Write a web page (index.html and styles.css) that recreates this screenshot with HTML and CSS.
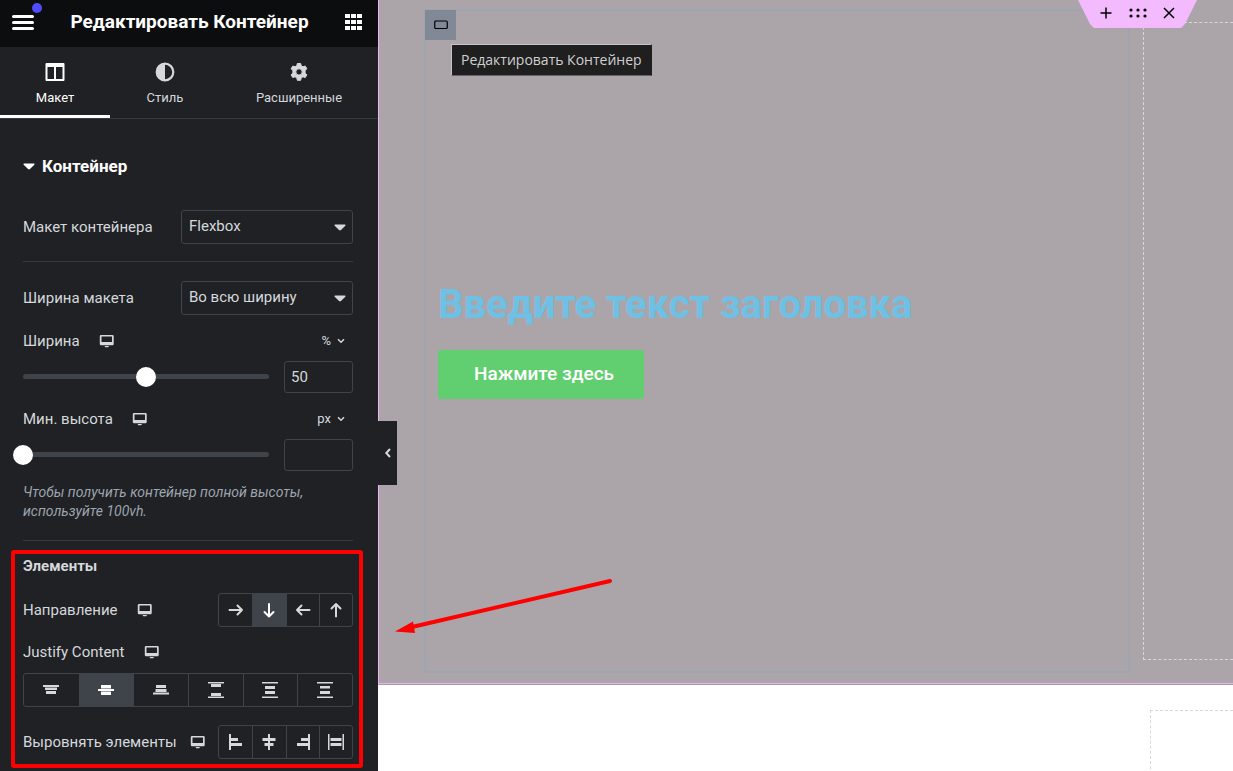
FILE: index.html
```html
<!DOCTYPE html>
<html lang="ru">
<head>
<meta charset="utf-8">
<meta name="viewport" content="width=device-width, initial-scale=1">
<title>Редактировать Контейнер</title>
<link rel="stylesheet" href="styles.css">
</head>
<body>
<svg class="sprite" aria-hidden="true">
  <symbol id="desktop" viewBox="0 0 16 14"><path fill-rule="evenodd" d="M2 1H13.500a1.200 1.200 0 0 1 1.200 1.200V10a1.200 1.200 0 0 1-1.200 1.200H2A1.200 1.200 0 0 1 .8 10V2.200A1.200 1.200 0 0 1 2 1ZM2.500 2.500V8H13V2.500ZM5.500 12h4.500l-.8 1.300H6.300Z"/></symbol>
  <symbol id="caret" viewBox="0 0 12 7"><path d="M1 .5h10q1 .3.300 1.200L7 6Q6 6.800 5 6L.7 1.700Q0 .8 1 .5Z"/></symbol>
  <symbol id="chevron" viewBox="0 0 8 6"><path d="M1 1.200 4 4.200 7 1.200" fill="none" stroke="currentColor" stroke-width="1.500"/></symbol>
</svg>
<div class="editor">
  <aside class="panel">
    <header class="panel-header">
      <button class="icon-button menu-button" aria-label="Меню">
        <svg width="22" height="15" viewBox="0 0 22 15"><path d="M1.500 1.500h19M1.500 7.500h19M1.500 13.500h19" stroke="currentColor" stroke-width="3" stroke-linecap="round"/></svg>
        <span class="notice-dot"></span>
      </button>
      <h1 class="panel-title">Редактировать Контейнер</h1>
      <button class="icon-button" aria-label="Виджеты">
        <svg width="17" height="16" viewBox="0 0 17 16"><path d="M0 0h5v4H0zM6 0h5v4H6zM12 0h5v4h-5zM0 6h5v4H0zM6 6h5v4H6zM12 6h5v4h-5zM0 12h5v4H0zM6 12h5v4H6zM12 12h5v4h-5z" fill="currentColor"/></svg>
      </button>
    </header>
    <nav class="tabs">
      <button class="tab tab-active">
        <svg width="20" height="20" viewBox="0 0 20 20"><path fill="currentColor" fill-rule="evenodd" d="M1.500 1h17q1 0 1 1v16q0 1-1 1h-17q-1 0-1-1V2q0-1 1-1ZM2.500 5v12H9V5ZM11 5v12h6.500V5Z"/></svg>
        <span>Макет</span>
      </button>
      <button class="tab">
        <svg width="20" height="20" viewBox="0 0 20 20"><circle cx="10" cy="10" r="8.300" fill="none" stroke="currentColor" stroke-width="2.200"/><path d="M10 1.500a8.500 8.500 0 0 0 0 17Z" fill="currentColor"/></svg>
        <span>Стиль</span>
      </button>
      <button class="tab">
        <svg width="20" height="20" viewBox="0 0 20 20"><path fill="currentColor" stroke="currentColor" stroke-linejoin="round" fill-rule="evenodd" d="M8.300 1.500h3.400l.5 2.300 1.800 1 2.200-.8 1.700 2.800-1.800 1.600v2.800l1.800 1.600-1.700 2.800-2.200-.8-1.800 1-.5 2.500H8.300l-.5-2.500-1.800-1-2.200.8-1.700-2.800 1.800-1.600V8.400L2.100 6.800 3.800 4l2.200.8 1.800-1ZM10 6.700a3.200 3.200 0 1 0 0 6.400 3.200 3.200 0 0 0 0-6.400Z"/></svg>
        <span>Расширенные</span>
      </button>
    </nav>
    <div class="controls">
      <button class="section-toggle"><svg width="12" height="7"><use href="#caret"/></svg>Контейнер</button>
      <div class="row">
        <label for="layout">Макет контейнера</label>
        <span class="select"><select id="layout"><option>Flexbox</option><option>Grid</option></select><svg width="12" height="7"><use href="#caret"/></svg></span>
      </div>
      <hr class="divider">
      <div class="row">
        <label for="width-mode">Ширина макета</label>
        <span class="select"><select id="width-mode"><option>Во всю ширину</option></select><svg width="12" height="7"><use href="#caret"/></svg></span>
      </div>
      <div class="row slider-label">
        <span class="label"><label for="width">Ширина</label><svg class="device" width="16" height="14"><use href="#desktop"/></svg></span>
        <button class="unit">%<svg width="8" height="6"><use href="#chevron"/></svg></button>
      </div>
      <div class="row slider-row">
        <span class="slider"><input type="range" id="width" min="0" max="100" value="50"></span>
        <input class="number" type="text" value="50" aria-label="Ширина, %">
      </div>
      <div class="row slider-label">
        <span class="label"><label for="height">Мин. высота</label><svg class="device" width="16" height="14"><use href="#desktop"/></svg></span>
        <button class="unit">px<svg width="8" height="6"><use href="#chevron"/></svg></button>
      </div>
      <div class="row slider-row">
        <span class="slider"><input type="range" id="height" min="0" max="100" value="0"></span>
        <input class="number" type="text" value="" aria-label="Мин. высота, px">
      </div>
      <p class="hint">Чтобы получить контейнер полной высоты, используйте 100vh.</p>
      <hr class="divider">
      <section class="items">
        <h2 class="items-title">Элементы</h2>
        <div class="row">
          <span class="label">Направление<svg class="device" width="16" height="14"><use href="#desktop"/></svg></span>
          <div class="choices" role="group" aria-label="Направление">
            <button aria-label="Вправо"><svg width="16" height="16" viewBox="0 0 16 16"><path class="line" d="M1.500 8h12.500M9.500 3.500 14 8l-4.500 4.500"/></svg></button>
            <button aria-label="Вниз" aria-pressed="true"><svg width="16" height="16" viewBox="0 0 16 16"><path class="line" d="M8 2V14.500M3.500 10 8 14.500l4.500-4.500"/></svg></button>
            <button aria-label="Влево"><svg width="16" height="16" viewBox="0 0 16 16"><path class="line" d="M14.500 8H2M6.500 3.500 2 8l4.500 4.500"/></svg></button>
            <button aria-label="Вверх"><svg width="16" height="16" viewBox="0 0 16 16"><path class="line" d="M8 14.500V2M3.500 6.500 8 2l4.500 4.500"/></svg></button>
          </div>
        </div>
        <div class="label justify-label">Justify Content<svg class="device" width="16" height="14"><use href="#desktop"/></svg></div>
        <div class="choices choices-wide" role="group" aria-label="Justify Content">
          <button aria-label="Начало"><svg width="16" height="16" viewBox="0 0 16 16"><path d="M0 3h16v2H0zM2 5.500h12V8H2zM3 9h10v3H3z"/></svg></button>
          <button aria-label="Центр" aria-pressed="true"><svg width="16" height="16" viewBox="0 0 16 16"><path d="M3 3h10v3.500H3zM0 7h16v2H0zM3 9.500h10V13H3z"/></svg></button>
          <button aria-label="Конец"><svg width="16" height="16" viewBox="0 0 16 16"><path d="M3 3h10v3H3zM2.500 7h11v3h-11zM0 10.500h16v2H0z"/></svg></button>
          <button aria-label="Между"><svg width="16" height="16" viewBox="0 0 16 16"><path d="M0 0h16v1.500H0zM3 2h10v3H3zM3 11h10v3H3zM0 14.500h16V16H0z"/></svg></button>
          <button aria-label="Вокруг"><svg width="16" height="16" viewBox="0 0 16 16"><path d="M0 0h16v1.500H0zM3 4h10v3H3zM3 9h10v3H3zM0 14.500h16V16H0z"/></svg></button>
          <button aria-label="Равномерно"><svg width="16" height="16" viewBox="0 0 16 16"><path d="M0 0h16v1.500H0zM3 4h10v2.500H3zM3 9h10v3H3zM0 14.500h16V16H0z"/></svg></button>
        </div>
        <div class="row">
          <span class="label">Выровнять элементы<svg class="device device-near" width="16" height="14"><use href="#desktop"/></svg></span>
          <div class="choices" role="group" aria-label="Выровнять элементы">
            <button aria-label="Начало"><svg width="16" height="16" viewBox="0 0 16 16"><path d="M1 0h2v16H1zM3 4h7v3H3zM3 9h11v3H3z"/></svg></button>
            <button aria-label="Центр"><svg width="16" height="16" viewBox="0 0 16 16"><path d="M7 0h2v16H7zM1.500 4h13v3h-13zM3.500 9h9v3h-9z"/></svg></button>
            <button aria-label="Конец"><svg width="16" height="16" viewBox="0 0 16 16"><path d="M13 0h2v16h-2zM6 4h7v3H6zM2 9h11v3H2z"/></svg></button>
            <button aria-label="Растянуть"><svg width="16" height="16" viewBox="0 0 16 16"><path d="M0 0h1.500v16H0zM14.500 0H16v16h-1.500zM2.500 4h11v3h-11zM2.500 9h11v3h-11z"/></svg></button>
          </div>
        </div>
      </section>
    </div>
    <button class="collapse" aria-label="Свернуть панель"><svg width="8" height="12" viewBox="0 0 8 12"><path d="M6 2 2.300 6 6 10" fill="none" stroke="currentColor" stroke-width="2"/></svg></button>
  </aside>
  <main class="preview">
    <section class="canvas-section">
      <div class="container-box">
        <button class="edit-handle" aria-label="Редактировать Контейнер"><svg width="14" height="10" viewBox="0 0 14 10"><rect x=".75" y="1" width="12.500" height="7.500" rx="1" fill="none" stroke="currentColor" stroke-width="1.200"/></svg></button>
        <span class="tooltip" role="tooltip">Редактировать Контейнер</span>
        <h2 class="heading">Введите текст заголовка</h2>
        <a class="cta" href="#">Нажмите здесь</a>
      </div>
      <div class="placeholder"></div>
      <div class="section-tools">
        <button aria-label="Добавить"><svg width="12" height="12" viewBox="0 0 12 12"><path d="M6 .5v11M.5 6h11" stroke="currentColor" stroke-width="1.500"/></svg></button>
        <button aria-label="Переместить"><svg width="18" height="10" viewBox="0 0 18 10"><g fill="currentColor"><circle cx="2" cy="2" r="1.600"/><circle cx="9" cy="2" r="1.600"/><circle cx="16" cy="2" r="1.600"/><circle cx="2" cy="8" r="1.600"/><circle cx="9" cy="8" r="1.600"/><circle cx="16" cy="8" r="1.600"/></g></svg></button>
        <button aria-label="Удалить"><svg width="12" height="12" viewBox="0 0 12 12"><path d="m1 1 10 10M11 1 1 11" stroke="currentColor" stroke-width="1.500"/></svg></button>
      </div>
      <svg class="pointer" width="220" height="58" viewBox="0 0 220 58" aria-hidden="true"><path d="M216 4 18 50" stroke="#f00" stroke-width="4" stroke-linecap="round"/><path d="M1 54.500 19 44.500l2 11.500Z" fill="#f00"/></svg>
    </section>
    <section class="next-section"><div class="placeholder"></div></section>
  </main>
</div>
</body>
</html>
```
FILE: styles.css
```css
* { box-sizing: border-box; }
body { margin: 0; font: 15px/20px Roboto, "Liberation Sans", sans-serif; color: #d5d8dc; background: #fff; }
button { margin: 0; padding: 0; border: 0; background: none; color: inherit; font: inherit; }
h1, h2, p { margin: 0; }
svg { display: block; flex: none; fill: currentColor; }
.sprite { display: none; }
.editor { display: grid; grid-template-columns: 378px minmax(0, 1fr); height: 100vh; overflow: hidden; }

.panel { position: relative; z-index: 2; background: #1f2124; }
.panel-header { display: flex; align-items: center; justify-content: space-between; height: 47px; padding: 0 16px 3px 12px; background: #0c0d0e; color: #fff; }
.panel-title { font-size: 19px; line-height: 24px; font-weight: 700; }
.menu-button { position: relative; }
.notice-dot { position: absolute; top: -12px; right: -8px; width: 10px; height: 10px; border-radius: 50%; background: #524cff; }
.tabs { display: grid; grid-template-columns: 110px 110px 1fr; height: 72px; border-bottom: 1px solid #35383d; }
.tab { display: flex; flex-direction: column; align-items: center; gap: 8px; padding-top: 15px; border-bottom: 3px solid transparent; font-size: 13px; line-height: 16px; }
.tab-active { border-color: #fff; color: #fff; }

.controls { padding: 0 25px 0 23px; }
.section-toggle { display: flex; align-items: center; gap: 7px; padding: 37px 0 34px; font-size: 17px; font-weight: 700; color: #fff; }
.row { display: flex; align-items: center; justify-content: space-between; }
.select { position: relative; display: flex; width: 172px; height: 34px; }
.select select { width: 100%; padding: 0 7px 2px; border: 1px solid #3f444b; border-radius: 3px; appearance: none; background: transparent; color: inherit; font: inherit; }
.select svg { position: absolute; top: 14px; right: 7px; pointer-events: none; }
.divider { height: 1px; margin: 17px 0 19px; border: 0; background: #35383d; }
.label { display: flex; align-items: center; }
.device { margin-left: 19px; }
.device-near { margin-left: 13px; }
.slider-label { padding: 16px 8px 10px 0; }
.unit { display: flex; align-items: center; gap: 6px; font-size: 13px; line-height: 20px; }
.slider-row { gap: 15px; }
.slider { position: relative; flex: 1; height: 20px; }
.slider::before { content: ""; position: absolute; inset: 7px 0 8px; border-radius: 3px; background: #3f444b; }
.slider input { position: relative; display: block; width: calc(100% + 20px); height: 20px; margin: 0 -10px; appearance: none; background: transparent; }
.slider input::-webkit-slider-thumb { appearance: none; width: 20px; height: 20px; border-radius: 50%; background: #fff; }
.slider input::-moz-range-thumb { width: 20px; height: 20px; border: 0; border-radius: 50%; background: #fff; }
.number { width: 69px; height: 32px; padding: 0 6px; border: 1px solid #3f444b; border-radius: 3px; background: transparent; color: inherit; font: inherit; }
.hint { padding-top: 12px; font-size: 14px; line-height: 19px; font-style: italic; color: #9da5ae; }
.items { position: relative; }
.items::after { content: ""; position: absolute; inset: -6px -10px -9px -12px; border: 4px solid #f00; border-radius: 3px; pointer-events: none; }
.items-title { padding: 0 0 17px; font-size: 15px; line-height: 20px; font-weight: 700; }
.hint + .divider { margin: 19px 0 15px; }
.choices { display: grid; grid-template-columns: repeat(4, 1fr); width: 135px; height: 34px; border: 1px solid #3f444b; border-radius: 3px; overflow: hidden; }
.choices button { display: grid; place-items: center; }
.choices button + button { border-left: 1px solid #3f444b; }
.choices [aria-pressed="true"] { background: #3f444b; color: #fff; }
.choices-wide { grid-template-columns: repeat(6, 1fr); width: 100%; margin: 11px 0 18px; }
.line { fill: none; stroke: currentColor; stroke-width: 2; stroke-linecap: round; stroke-linejoin: round; }
.justify-label { padding-top: 15px; }
.collapse { position: absolute; top: 421px; left: 100%; display: grid; place-items: center; width: 19px; height: 64px; background: #1f2124; }

.preview { min-width: 0; }
.canvas-section { position: relative; display: flex; gap: 13px; height: 685px; padding: 9px 0 11px 45px; border-left: 1px solid #efb1f8; border-bottom: 1px solid #a29ca1; background: #aba5a9; box-shadow: inset 0 -1px #efb1f8; }
.container-box { position: relative; display: flex; flex: 1; flex-direction: column; align-items: flex-start; justify-content: center; gap: 20px; padding: 18px 12px 22px; border: 2px solid #9ca5b0; }
.edit-handle { position: absolute; top: -1px; left: -1px; display: grid; place-items: center; width: 31px; height: 30px; background: #808995; color: #000; }
.tooltip { position: absolute; top: 33px; left: 25px; padding: 5px 9px; border: 1px solid; border-color: #c6c2c5 #1f1f1f #656266 #c6c2c5; background: #1f1f1f; color: #d0d0d0; font: 14px/20px "Open Sans", "Noto Sans", sans-serif; white-space: nowrap; }
.heading { font-size: 40px; line-height: 50px; font-weight: 700; color: #6ec1e4; }
.cta { padding: 14px 30px 15px 36px; border-radius: 3px; background: #61ce70; color: #fff; font-size: 19px; line-height: 20px; font-weight: 500; text-decoration: none; }
.placeholder { border: 1px dashed #d5d8dc; border-right: 0; }
.canvas-section .placeholder { width: 90px; margin: 13px 0; }
.section-tools { position: absolute; top: 0; right: 36px; display: flex; align-items: center; justify-content: space-between; width: 119px; height: 28px; padding: 0 22px 3px; background: #f3bafd; clip-path: polygon(0 0, 100% 0, 107px 24px, 103px 28px, 16px 28px, 12px 24px); color: #000; }
.pointer { position: absolute; top: 577px; left: 15px; }
.next-section { padding-top: 25px; }
.next-section .placeholder { width: 83px; height: 100px; margin-left: auto; }
```
